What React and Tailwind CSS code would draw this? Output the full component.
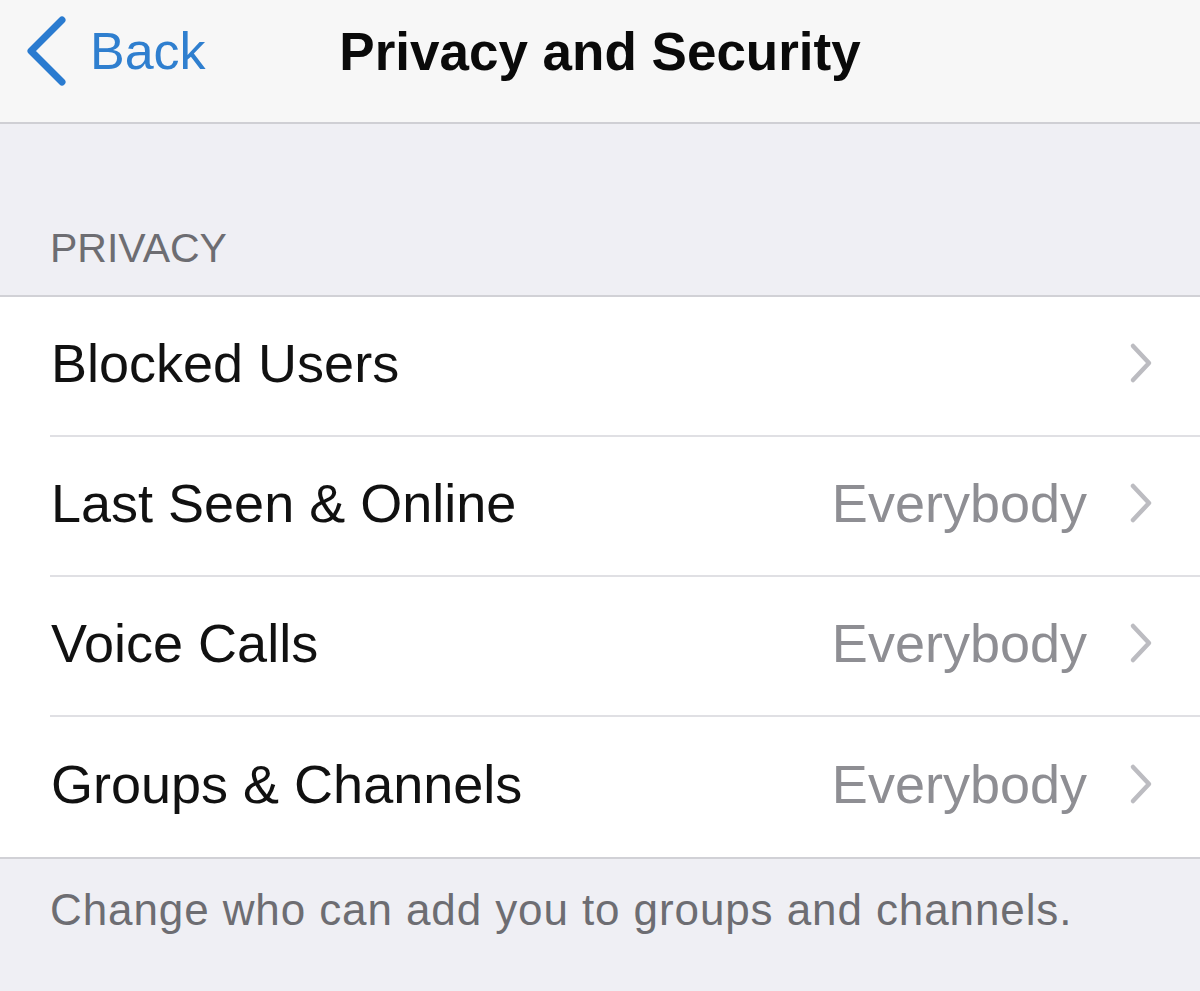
import React from "react";

const rows = [
  { label: "Blocked Users", value: "" },
  { label: "Last Seen & Online", value: "Everybody" },
  { label: "Voice Calls", value: "Everybody" },
  { label: "Groups & Channels", value: "Everybody" },
];

function Chevron() {
  return (
    <svg width="26" height="42" viewBox="0 0 26 42" className="shrink-0">
      <polyline
        points="5,4 21,21 5,38"
        fill="none"
        stroke="#bcbcc1"
        strokeWidth="4.5"
        strokeLinecap="round"
        strokeLinejoin="round"
      />
    </svg>
  );
}

export default function App() {
  return (
    <div
      className="w-[1200px] h-[991px] bg-[#efeff4] flex flex-col overflow-hidden"
      style={{ fontFamily: '"Liberation Sans", Arial, sans-serif' }}
    >
      {/* Header */}
      <div className="h-[124px] shrink-0 bg-[#f7f7f7] border-b-2 border-[#cfcfd4] grid grid-cols-[1fr_auto_1fr] items-center pb-[20px]">
        <div className="flex items-center pl-[22px] gap-[20px]">
          <svg width="48" height="70" viewBox="0 0 48 70">
            <polyline
              points="40,4 9,35 40,66"
              fill="none"
              stroke="#2a7bd0"
              strokeWidth="7"
              strokeLinecap="round"
              strokeLinejoin="round"
            />
          </svg>
          <span className="text-[52px] leading-none text-[#2f7fcf]">Back</span>
        </div>
        <div className="text-[53px] leading-none font-bold text-[#0a0a0a]">
          Privacy and Security
        </div>
        <div />
      </div>

      {/* Section header */}
      <div className="h-[171px] shrink-0 flex items-end pl-[50px] pb-[26px]">
        <span className="text-[41px] leading-none text-[#6d6d72]">PRIVACY</span>
      </div>

      {/* Rows */}
      <div className="bg-white border-t-2 border-b-2 border-[#d1d1d6] shrink-0">
        {rows.map((r, i) => (
          <div key={r.label} className="pl-[50px]">
            <div
              className={
                "h-[140px] flex items-center pr-[46px] pb-[6px] " +
                (i < rows.length - 1 ? "border-b-2 border-[#e0e0e4]" : "")
              }
            >
              <span className="flex-1 text-[54px] leading-none text-[#111111] pl-[1px]">
                {r.label}
              </span>
              {r.value && (
                <span className="text-[54px] leading-none text-[#8e8e93] mr-[41px]">
                  {r.value}
                </span>
              )}
              <Chevron />
            </div>
          </div>
        ))}
      </div>

      {/* Footer */}
      <div className="pl-[50px] pt-[29px]">
        <span className="text-[44px] leading-none text-[#6d6d72] tracking-[0.9px]">
          Change who can add you to groups and channels.
        </span>
      </div>
    </div>
  );
}
